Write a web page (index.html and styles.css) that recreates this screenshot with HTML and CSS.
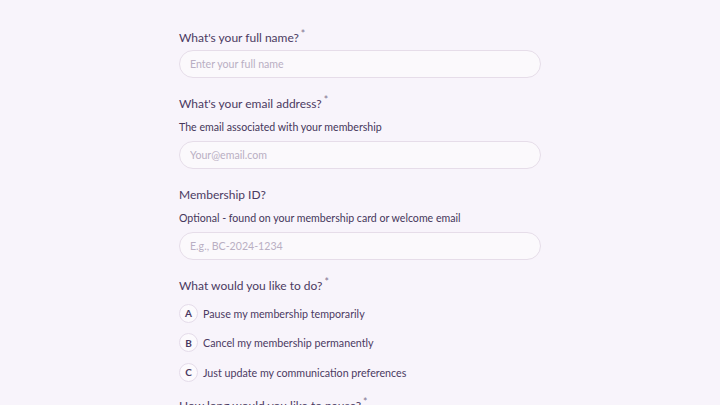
FILE: index.html
```html
<!DOCTYPE html>
<html lang="en">
<head>
<meta charset="utf-8">
<title>Membership form</title>
<link rel="stylesheet" href="styles.css">
</head>
<body>
<form class="form">
  <div class="field">
    <label class="label">What's your full name?<span class="req">*</span></label>
    <input class="input" type="text" placeholder="Enter your full name">
  </div>
  <div class="field">
    <label class="label">What's your email address?<span class="req">*</span></label>
    <p class="desc">The email associated with your membership</p>
    <input class="input" type="text" placeholder="Your@email.com">
  </div>
  <div class="field">
    <label class="label">Membership ID?</label>
    <p class="desc">Optional - found on your membership card or welcome email</p>
    <input class="input" type="text" placeholder="E.g., BC-2024-1234">
  </div>
  <div class="field">
    <label class="label">What would you like to do?<span class="req">*</span></label>
    <div class="options">
      <div class="option"><span class="key">A</span><span class="opt-text">Pause my membership temporarily</span></div>
      <div class="option"><span class="key">B</span><span class="opt-text">Cancel my membership permanently</span></div>
      <div class="option"><span class="key">C</span><span class="opt-text">Just update my communication preferences</span></div>
    </div>
  </div>
  <div class="field">
    <label class="label">How long would you like to pause?<span class="req">*</span></label>
  </div>
</form>
</body>
</html>
```
FILE: styles.css
```css
html, body {
  margin: 0;
  padding: 0;
  background: #f8f4fb;
  height: 100%;
  overflow: hidden;
}
body {
  font-family: Lato, "Open Sans", sans-serif;
  color: #4b3a62;
}
.form {
  width: 362px;
  margin: 0 auto;
  padding-top: 30px;
  display: flex;
  flex-direction: column;
  gap: 18px;
}
.field {
  display: flex;
  flex-direction: column;
}
.label {
  font-size: 12px;
  line-height: 16px;
  height: 16px;
  color: #4b3a62;
  margin-bottom: 4px;
}
.req {
  font-size: 10.5px;
  line-height: 0;
  color: #857694;
  vertical-align: 4px;
  margin-left: 2px;
}
.desc {
  margin: 4px 0 7px;
  font-size: 10.6px;
  line-height: 14px;
  color: #45365a;
}
.input {
  box-sizing: border-box;
  height: 28px;
  width: 100%;
  border: 1px solid #e6dde9;
  border-radius: 14px;
  background: #fbf9fc;
  padding: 0 10px;
  font-family: Lato, "Open Sans", sans-serif;
  font-size: 10.6px;
  color: #4b3a62;
  outline: none;
}
.input::placeholder {
  color: #b9afc3;
}
.options {
  margin-top: 5px;
  margin-bottom: -2px;
  display: flex;
  flex-direction: column;
  gap: 9.5px;
}
.option {
  display: flex;
  align-items: center;
  gap: 5px;
  height: 20px;
}
.key {
  box-sizing: border-box;
  width: 19px;
  height: 19px;
  border-radius: 50%;
  border: 1px solid #e5dcea;
  background: #fcfafd;
  display: flex;
  align-items: center;
  justify-content: center;
  font-size: 10px;
  font-weight: 700;
  color: #4b3a62;
}
.opt-text {
  font-size: 10.7px;
  color: #4b3a62;
}
```
